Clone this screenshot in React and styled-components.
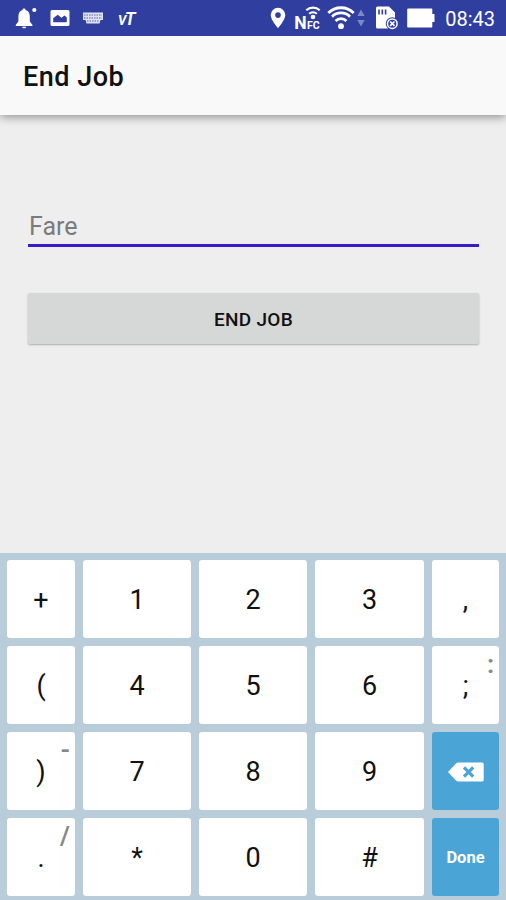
import React from "react";
import styled, { createGlobalStyle } from 'styled-components';

const keys = [
  { label: '+' },
  { label: '1' },
  { label: '2' },
  { label: '3' },
  { label: ',' },
  { label: '(' },
  { label: '4' },
  { label: '5' },
  { label: '6' },
  { label: ';', hint: ':' },
  { label: ')', hint: '-' },
  { label: '7' },
  { label: '8' },
  { label: '9' },
  { label: 'delete', action: true },
  { label: '.', hint: '/' },
  { label: '*' },
  { label: '0' },
  { label: '#' },
  { label: 'Done', action: true },
];

const BellIcon = () => (
  <Icon width="22" height="24" viewBox="0 0 22 24">
    <path d="M9 2.5c1 0 1.6.7 1.6 1.6 3 .9 4.2 3.3 4.2 6.3v5.2l2.6 3.2v1.3H.8v-1.3l2.6-3.2v-5.2c0-3 1.2-5.4 4.1-6.3 0-.9.6-1.6 1.5-1.6zM7 20.7h4.3c-.3 1.1-1 1.6-2.1 1.6S7.3 21.8 7 20.7z" />
    <circle cx="19.3" cy="4" r="2.1" />
  </Icon>
);

const PictureIcon = () => (
  <Icon width="20" height="18" viewBox="0 0 20 18">
    <path fillRule="evenodd" d="M2 1h16a1.5 1.5 0 0 1 1.5 1.5v13A1.5 1.5 0 0 1 18 17H2a1.5 1.5 0 0 1-1.5-1.5v-13A1.5 1.5 0 0 1 2 1zM3.2 13.2h13.6V8.500l-2.3-2-3 2.3-3.8-3-4.5 3.5z" />
  </Icon>
);

const KeyboardIcon = () => (
  <Icon width="20" height="12" viewBox="0 0 20 12">
    <path d="M0 .5h20v7.5h-2.5l-1 3.5h-13l-1-3.5H0z" opacity=".85" />
    <path d="M1 3h18M1 6h18M4 9h12" stroke="#303f9f" strokeWidth=".8" strokeDasharray="1.5 1" />
  </Icon>
);

const PinIcon = () => (
  <Icon width="16" height="22" viewBox="0 0 16 22">
    <path fillRule="evenodd" d="M8 .8a7.3 7.3 0 0 1 7.3 7.3C15.3 13 8 21.3 8 21.3S.7 13 .7 8.1A7.3 7.3 0 0 1 8 .8zm0 4.5a2.8 2.8 0 1 0 0 5.6 2.8 2.8 0 0 0 0-5.6z" />
  </Icon>
);

const NfcIcon = () => (
  <Icon width="28" height="30" viewBox="0 0 28 30">
    <text x="0.3" y="25.5" fontSize="17.5" fontWeight="700" fontFamily="Roboto, sans-serif">N</text>
    <text x="13" y="25.5" fontSize="10.5" fontWeight="700" fontFamily="Roboto, sans-serif">FC</text>
    <circle cx="19" cy="14" r="2.3" />
    <path d="M15.2 10.8a5.4 5.4 0 0 1 7.6 0M12.3 7.3a9.6 9.6 0 0 1 13.4 0" fill="none" stroke="#fff" strokeWidth="2.1" />
  </Icon>
);

const WifiIcon = () => (
  <Icon width="28" height="24" viewBox="0 0 28 24">
    <circle cx="14" cy="20.2" r="2.9" />
    <path d="M8.6 14.9a7.6 7.6 0 0 1 10.8 0M5 10.7a12.7 12.7 0 0 1 18 0M1.3 7a18 18 0 0 1 25.4 0" fill="none" stroke="#fff" strokeWidth="2.8" />
  </Icon>
);

const TrafficIcon = () => (
  <Icon width="8" height="20" viewBox="0 0 8 20">
    <path d="M4 1.5l3.7 6.5H.3zM4 18.5l3.7-6.5H.3z" opacity=".38" />
  </Icon>
);

const SdCardIcon = () => (
  <Icon width="24" height="24" viewBox="0 0 24 24">
    <path d="M2.5.5H14l6 6v16H2.5A1.5 1.5 0 0 1 1 21V2A1.5 1.5 0 0 1 2.5.5z" />
    <path d="M4 3.5v5M7.3 3.5v5M10.600 3.5v5" stroke="#303f9f" strokeWidth="1.6" />
    <circle cx="17.3" cy="17.7" r="6.5" fill="#303f9f" />
    <circle cx="17.3" cy="17.7" r="4.8" fill="#303f9f" stroke="#fff" strokeWidth="1.5" />
    <path d="M15.1 15.5l4.4 4.4M19.5 15.5l-4.4 4.4" stroke="#fff" strokeWidth="1.7" />
  </Icon>
);

const BatteryIcon = () => (
  <Icon width="28" height="20" viewBox="0 0 28 20">
    <path d="M1 .5h23.5a.8.8 0 0 1 .8.8V6h2.2v8h-2.2v4.7a.8.8 0 0 1-.8.8H1a.8.8 0 0 1-.8-.8V1.3A.8.8 0 0 1 1 .5z" />
  </Icon>
);

const DeleteIcon = () => (
  <Icon width="36" height="20" viewBox="0 0 36 20">
    <path d="M0 10L8 1.5C8.6.8 9.3.4 10.3.4H34A1.7 1.7 0 0 1 35.7 2v16a1.7 1.7 0 0 1-1.7 1.6H10.3c-1 0-1.7-.4-2.3-1.1z" />
    <path d="M16 5.300l9.2 9.4M25.2 5.3L16 14.7" stroke="#4aa5d6" strokeWidth="3.2" />
  </Icon>
);

const App = () => {
  return (
    <Screen>
      <GlobalStyle />
      <StatusBar>
        <Notifications>
          <BellIcon />
          <PictureIcon />
          <KeyboardIcon />
          <SwipeMark>v<b>T</b></SwipeMark>
        </Notifications>
        <SystemIcons>
          <PinIcon />
          <NfcIcon />
          <Signal>
            <WifiIcon />
            <TrafficIcon />
          </Signal>
          <SdCardIcon />
          <BatteryIcon />
          <Clock>08:43</Clock>
        </SystemIcons>
      </StatusBar>
      <AppBar>End Job</AppBar>
      <Content>
        <FareInput placeholder="Fare" />
        <EndButton>END JOB</EndButton>
      </Content>
      <Keyboard>
        {keys.map((key) => (
          <Key key={key.label} $action={key.action}>
            {key.label === 'delete' ? <DeleteIcon /> : key.label}
            {key.hint && <Hint>{key.hint}</Hint>}
          </Key>
        ))}
      </Keyboard>
    </Screen>
  );
};

export default App;

const GlobalStyle = createGlobalStyle`
  * {
    box-sizing: border-box;
  }

  body {
    margin: 0;
    font-family: Roboto, sans-serif;
  }
`;

const Screen = styled.div`
  display: flex;
  flex-direction: column;
  width: 506px;
  height: 900px;
  background-color: #eeeeee;
  overflow: hidden;
`;

const Icon = styled.svg`
  display: block;
  flex-shrink: 0;
  fill: #fff;
`;

const StatusBar = styled.div`
  position: relative;
  z-index: 1;
  display: flex;
  justify-content: space-between;
  align-items: center;
  height: 36px;
  padding: 0 11px 0 15px;
  background-color: #303f9f;
  color: #fff;
`;

const Notifications = styled.div`
  display: flex;
  align-items: center;
  gap: 13px;
`;

const SwipeMark = styled.div`
  margin-left: 2px;
  font-size: 18px;
  font-style: italic;
  font-weight: 500;
  letter-spacing: -2px;

  b {
    font-weight: 600;
  }
`;

const SystemIcons = styled.div`
  display: flex;
  align-items: center;
  gap: 8px;
`;

const Signal = styled.div`
  display: flex;
  align-items: center;
  gap: 2px;
  margin: 0 2px 0 -3px;
`;

const Clock = styled.div`
  margin-left: 2px;
  font-size: 20px;
  line-height: 36px;
  padding-top: 1px;
`;

const AppBar = styled.div`
  display: flex;
  align-items: center;
  height: 79px;
  padding: 3px 23px 0;
  background-color: #f9f9f9;
  box-shadow: 0 2px 9px rgba(0, 0, 0, 0.4);
  color: #111;
  font-size: 27px;
  font-weight: 500;
  letter-spacing: 0.5px;
`;

const Content = styled.div`
  display: flex;
  flex-direction: column;
  flex: 1;
  padding: 86px 27px 0 28px;
`;

const FareInput = styled.input`
  height: 46px;
  padding: 8px 0 0 1px;
  border: none;
  border-bottom: 3px solid #3a1bc6;
  outline: none;
  background: transparent;
  font-family: inherit;
  font-size: 25px;

  &::placeholder {
    color: #7b7b7b;
  }
`;

const EndButton = styled.button`
  height: 51px;
  margin-top: 46px;
  padding: 1px 0 0;
  border: none;
  border-radius: 2px;
  background-color: #d6d8d7;
  box-shadow: 0 1px 2px rgba(0, 0, 0, 0.28);
  color: #111;
  font-family: inherit;
  font-size: 19px;
  font-weight: 500;
  letter-spacing: 0.3px;
`;

const Keyboard = styled.div`
  display: grid;
  grid-template-columns: 68px 108px 108px 109px 67px;
  grid-template-rows: repeat(4, 77.5px);
  gap: 8.5px 8px;
  height: 347px;
  padding: 7px 7px 0;
  background-color: #b9ccd9;
`;

const Key = styled.div`
  position: relative;
  display: flex;
  justify-content: center;
  align-items: center;
  padding-top: 1.5px;
  border-radius: 3px;
  background-color: ${(props) => (props.$action ? '#4aa5d6' : '#fff')};
  color: ${(props) => (props.$action ? '#fff' : '#111')};
  font-size: ${(props) => (props.$action ? '16.5px' : '27px')};
  font-weight: ${(props) => (props.$action ? 700 : 400)};
`;

const Hint = styled.span`
  position: absolute;
  top: 3px;
  right: 5px;
  color: #888;
  font-size: 26px;
  font-weight: 600;
  line-height: 30px;
`;
